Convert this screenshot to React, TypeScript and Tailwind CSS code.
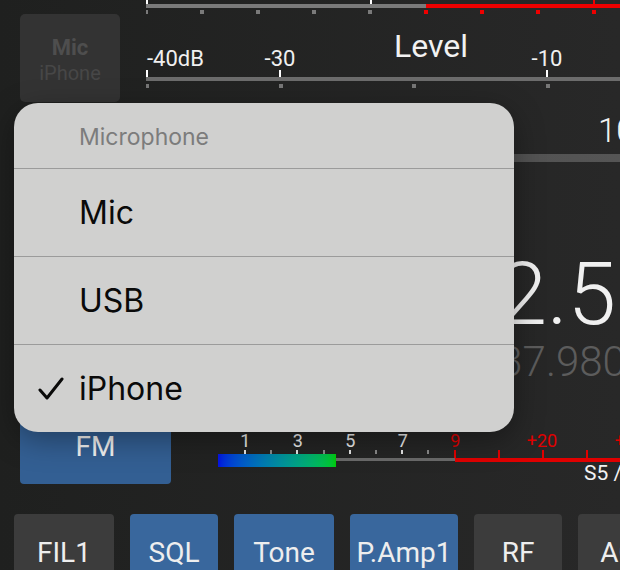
import React from 'react';

// top meter: squares every 56px, grey up to 280 then red
const topSquares = [0, 56, 112, 168, 224, 280, 336, 392, 448];

const sLabels = [
  { t: '1', red: false },
  { t: '3', red: false },
  { t: '5', red: false },
  { t: '7', red: false },
  { t: '9', red: true },
];

const buttons = [
  { t: 'FIL1', w: 'w-[100px]', on: false },
  { t: 'SQL', w: 'w-[88px]', on: true },
  { t: 'Tone', w: 'w-[100px]', on: true },
  { t: 'P.Amp1', w: 'w-[108px]', on: true },
  { t: 'RF', w: 'w-[88px]', on: false },
  { t: 'AGC', w: 'w-[100px]', on: false },
];

function MicButton() {
  return (
    <div className="w-[100px] h-[88px] pt-[3px] rounded-[5px] bg-[#333333] flex flex-col items-center justify-center">
      <div className="text-[22px] font-bold text-[#4e4e4e] leading-[26px]">Mic</div>
      <div className="text-[20px] text-[#474747] leading-[24px]">iPhone</div>
    </div>
  );
}

function TopMeter() {
  return (
    <div className="h-[16px] flex flex-col">
      <div className="flex h-[4px]">
        <div className="w-[2px] bg-white" />
        <div className="w-[222px]" />
        <div className="w-[2px] bg-white" />
        <div className="w-[221px]" />
        <div className="w-[2px] bg-[#ee0000]" />
      </div>
      <div className="flex h-[4px]">
        <div className="w-[280px] bg-[#7a7a7a]" />
        <div className="flex-1 bg-[#ee0000]" />
      </div>
      <div className="mt-[2px] -ml-[2px] flex gap-[52px]">
        {topSquares.map((x) => (
          <div key={x} className={'shrink-0 w-[4px] h-[4px] ' + (x >= 280 ? 'bg-[#ee0000]' : 'bg-[#7a7a7a]')} />
        ))}
      </div>
    </div>
  );
}

function LevelScale() {
  return (
    <div className="flex flex-col">
      <div className="h-[54px] flex items-end text-[22px] leading-[22px] text-[#f0f0f0] whitespace-nowrap">
        <div className="w-[104px] pl-[1px]">-40dB</div>
        <div className="w-[60px] text-center">-30</div>
        <div className="w-[207px] pl-[84px] mb-[8px] text-[32px] leading-[32px] text-[#f2f2f2]">Level</div>
        <div className="w-[60px] text-center">-10</div>
      </div>
      <div className="flex h-[7px]">
        <div className="w-[2px] bg-white" />
        <div className="w-[131px]" />
        <div className="w-[2px] bg-white" />
        <div className="w-[265px]" />
        <div className="w-[2px] bg-white" />
      </div>
      <div className="h-[4px] bg-[#6c6c6c]" />
      <div className="mt-[3px] -ml-[1px] flex gap-[129.5px]">
        {[0, 1, 2, 3, 4].map((i) => (
          <div key={i} className="shrink-0 w-[4px] h-[4px] bg-[#777777]" />
        ))}
      </div>
    </div>
  );
}

function SMeter() {
  return (
    <div className="flex-1 flex flex-col pt-[22px]">
      <div className="flex h-[20px] text-[18px] leading-[18px] whitespace-nowrap">
        <div className="w-[1px]" />
        {sLabels.map((l) => (
          <div key={l.t} className={'w-[52.5px] text-center ' + (l.red ? 'text-[#e00000]' : 'text-[#eeeeee]')}>
            {l.t}
          </div>
        ))}
        <div className="w-[16.5px]" />
        <div className="w-[88px] text-center text-[#e00000]">+20</div>
        <div className="w-[88px] text-center text-[#e00000]">+40</div>
      </div>
      <div className="flex items-start h-[4px] pl-[26px]">
        <div className="flex gap-[24.2px]">
          {[0, 1, 2, 3, 4, 5, 6, 7].map((i) => (
            <div key={i} className={'shrink-0 w-[2px] h-[4px] ' + (i % 2 === 0 ? 'bg-[#e6e6e6]' : 'bg-[#8a8a8a]')} />
          ))}
        </div>
        <div className="ml-[25px] flex gap-[41.8px]">
          {[0, 1, 2, 3, 4].map((i) => (
            <div key={i} className="shrink-0 w-[2px] h-[8px] bg-[#e00000]" />
          ))}
        </div>
      </div>
      <div className="flex items-start">
        <div className="w-[118px] h-[13px] bg-gradient-to-r from-[#0b10e2] to-[#00cc00]" />
        <div className="mt-[4px] w-[119px] h-[3px] bg-[#6a6a6a]" />
        <div className="mt-[4px] flex-1 h-[4px] bg-[#e00000]" />
      </div>
      <div className="-mt-[4px] pl-[366px] whitespace-nowrap text-[21px] leading-[21px] text-[#f2f2f2]">S5 / +10dB</div>
    </div>
  );
}

function Menu() {
  const items = ['Mic', 'USB', 'iPhone'];
  return (
    <div className="absolute left-[14px] top-[103px] w-[500px] h-[329px] rounded-[24px] bg-[#d0d0cf] shadow-[0_8px_30px_rgba(0,0,0,0.35)] overflow-hidden font-['Inter',sans-serif]">
      <div className="h-[65px] pt-[4px] flex items-center pl-[65px] text-[23px] text-[#7c7c7c]">Microphone</div>
      {items.map((it) => (
        <div key={it} className="h-[88px] border-t border-[#9b9b9b] flex items-center pl-[24px] text-[32px] text-[#0a0a0a]">
          <span className="w-[41px] flex items-center">
            {it === 'iPhone' && (
              <svg width="26" height="26" viewBox="0 0 26 26" fill="none">
                <path d="M2 14 L9 22 L24 3" stroke="#0a0a0a" strokeWidth="3" strokeLinecap="round" strokeLinejoin="round" />
              </svg>
            )}
          </span>
          <span>{it}</span>
        </div>
      ))}
    </div>
  );
}

export default function App() {
  return (
    <div className="relative w-[620px] h-[570px] overflow-hidden bg-gradient-to-r from-[#1f201f] to-[#282828] font-['Roboto',sans-serif] text-white">
      <div className="flex h-[101px]">
        <div className="w-[146px] shrink-0 pl-5 pt-[14px]">
          <MicButton />
        </div>
        <div className="flex-1 overflow-hidden">
          <TopMeter />
          <LevelScale />
        </div>
      </div>

      <div className="h-[309px] pl-[146px] flex flex-col">
        <div className="mt-[13px] flex justify-end">
          <div className="w-[22px] overflow-hidden whitespace-nowrap text-[33px] leading-[33px] font-light text-[#f2f2f2]">100</div>
        </div>
        <div className="mt-[7px] h-[8px] bg-gradient-to-r from-[#4a4a4a] to-[#555555]" />
        <div className="mt-[94px] text-right pr-[4px] text-[87px] leading-[76px] font-light text-[#f0f0f0] whitespace-nowrap">432.5</div>
        <div className="mt-[9px] pl-[330px] text-[42px] leading-[42px] font-light text-[#5c5c5c] whitespace-nowrap">437.980</div>
      </div>

      <div className="flex h-[74px]">
        <div className="ml-5 w-[151px] h-[74px] rounded-[4px] bg-[#335f93] flex items-center justify-center text-[28px] text-[#f2f2f2]">FM</div>
        <div className="ml-[47px] flex-1 flex overflow-hidden">
          <SMeter />
        </div>
      </div>

      <div className="mt-[30px] flex gap-4 pl-[14px]">
        {buttons.map((b) => (
          <div
            key={b.t}
            className={
              'shrink-0 h-[78px] rounded-[4px] flex items-center justify-center text-[28px] text-[#eeeeee] ' +
              b.w +
              (b.on ? ' bg-[#39679d]' : ' bg-[#3c3c3c]')
            }
          >
            {b.t}
          </div>
        ))}
      </div>

      <Menu />
    </div>
  );
}
